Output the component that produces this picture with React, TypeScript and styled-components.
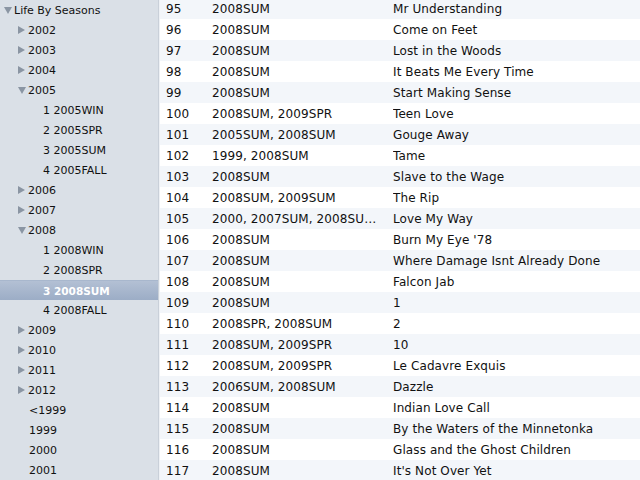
import React from "react";
import styled, { createGlobalStyle } from "styled-components";

const Global = createGlobalStyle`
  html, body { margin: 0; padding: 0; background: #fff; overflow: hidden; }
  body { font-family: "DejaVu Sans", "Liberation Sans", sans-serif; }
`;

const Frame = styled.div`
  display: flex;
  width: 640px;
  height: 480px;
  overflow: hidden;
`;

const Sidebar = styled.div`
  width: 158px;
  flex: none;
  background: #dae0e7;
  border-right: 1px solid #c9d0d9;
  display: flex;
  flex-direction: column;
`;

const SideRow = styled.div<{ $indent: number; $selected?: boolean }>`
  height: 20px;
  flex: none;
  display: flex;
  align-items: center;
  padding-left: ${(p) => p.$indent}px;
  font-size: ${(p) => (p.$selected ? "10.5px" : "11px")};
  color: ${(p) => (p.$selected ? "#fff" : "#111")};
  font-weight: ${(p) => (p.$selected ? "bold" : "normal")};
  background: ${(p) =>
    p.$selected ? "linear-gradient(#b3c0d4, #9cadc6)" : "transparent"};
  border-top: ${(p) => (p.$selected ? "1px solid #a8b7cd" : "none")};
  box-sizing: border-box;
  white-space: nowrap;
`;

const TriBox = styled.svg`
  width: 11px;
  height: 10px;
  flex: none;
`;

const Tri = ({ open }: { open: boolean }) => (
  <TriBox viewBox="0 0 11 10">
    {open ? (
      <path d="M1 2 L9 2 L5 9 Z" fill="#8a95a3" />
    ) : (
      <path d="M1 1 L8 5 L1 9 Z" fill="#8a95a3" />
    )}
  </TriBox>
);

const Table = styled.div`
  flex: 1;
  display: flex;
  flex-direction: column;
  margin-top: -2px;
  border-left: 1px solid #eef1f5;
`;

const Row = styled.div<{ $alt: boolean }>`
  height: 21px;
  flex: none;
  display: grid;
  grid-template-columns: 46px 181px 1fr;
  align-items: center;
  padding-left: 6px;
  background: ${(p) => (p.$alt ? "#f3f6fa" : "#fff")};
  font-size: 12px;
  letter-spacing: 0.1px;
  color: #111;
  white-space: nowrap;
`;

const Cell = styled.div`
  min-width: 0;
  overflow: hidden;
  padding-right: 8px;
`;

type Side = { label: string; indent: number; tri?: "open" | "closed"; selected?: boolean };

const side: Side[] = [
  { label: "Life By Seasons", indent: 3, tri: "open" },
  { label: "2002", indent: 17, tri: "closed" },
  { label: "2003", indent: 17, tri: "closed" },
  { label: "2004", indent: 17, tri: "closed" },
  { label: "2005", indent: 17, tri: "open" },
  { label: "1 2005WIN", indent: 43 },
  { label: "2 2005SPR", indent: 43 },
  { label: "3 2005SUM", indent: 43 },
  { label: "4 2005FALL", indent: 43 },
  { label: "2006", indent: 17, tri: "closed" },
  { label: "2007", indent: 17, tri: "closed" },
  { label: "2008", indent: 17, tri: "open" },
  { label: "1 2008WIN", indent: 43 },
  { label: "2 2008SPR", indent: 43 },
  { label: "3 2008SUM", indent: 43, selected: true },
  { label: "4 2008FALL", indent: 43 },
  { label: "2009", indent: 17, tri: "closed" },
  { label: "2010", indent: 17, tri: "closed" },
  { label: "2011", indent: 17, tri: "closed" },
  { label: "2012", indent: 17, tri: "closed" },
  { label: "<1999", indent: 29 },
  { label: "1999", indent: 29 },
  { label: "2000", indent: 29 },
  { label: "2001", indent: 29 },
];

const rows: [number, string, string][] = [
  [95, "2008SUM", "Mr Understanding"],
  [96, "2008SUM", "Come on Feet"],
  [97, "2008SUM", "Lost in the Woods"],
  [98, "2008SUM", "It Beats Me Every Time"],
  [99, "2008SUM", "Start Making Sense"],
  [100, "2008SUM, 2009SPR", "Teen Love"],
  [101, "2005SUM, 2008SUM", "Gouge Away"],
  [102, "1999, 2008SUM", "Tame"],
  [103, "2008SUM", "Slave to the Wage"],
  [104, "2008SUM, 2009SUM", "The Rip"],
  [105, "2000, 2007SUM, 2008SU…", "Love My Way"],
  [106, "2008SUM", "Burn My Eye '78"],
  [107, "2008SUM", "Where Damage Isnt Already Done"],
  [108, "2008SUM", "Falcon Jab"],
  [109, "2008SUM", "1"],
  [110, "2008SPR, 2008SUM", "2"],
  [111, "2008SUM, 2009SPR", "10"],
  [112, "2008SUM, 2009SPR", "Le Cadavre Exquis"],
  [113, "2006SUM, 2008SUM", "Dazzle"],
  [114, "2008SUM", "Indian Love Call"],
  [115, "2008SUM", "By the Waters of the Minnetonka"],
  [116, "2008SUM", "Glass and the Ghost Children"],
  [117, "2008SUM", "It's Not Over Yet"],
];

export default function App() {
  return (
    <Frame>
      <Global />
      <Sidebar>
        {side.map((s) => (
          <SideRow key={s.label} $indent={s.indent} $selected={s.selected}>
            {s.tri && <Tri open={s.tri === "open"} />}
            {s.label}
          </SideRow>
        ))}
      </Sidebar>
      <Table>
        {rows.map((r, i) => (
          <Row key={r[0]} $alt={i % 2 === 0}>
            <Cell>{r[0]}</Cell>
            <Cell>{r[1]}</Cell>
            <Cell>{r[2]}</Cell>
          </Row>
        ))}
      </Table>
    </Frame>
  );
}
